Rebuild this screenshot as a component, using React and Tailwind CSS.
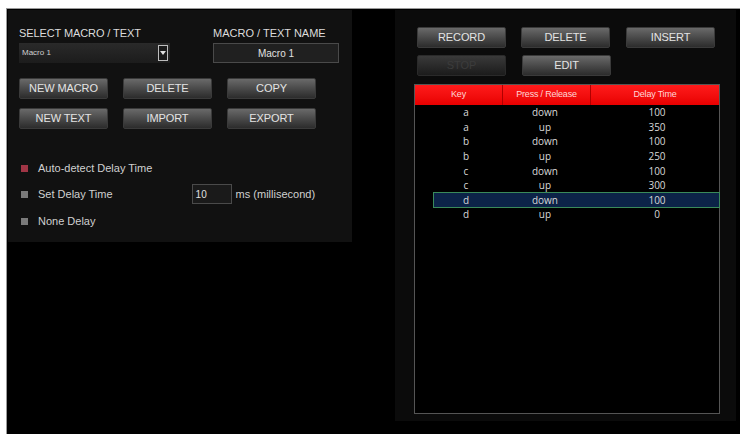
import React from "react";

const F = { fontFamily: '"Liberation Sans", Arial, sans-serif' };
const OS = { fontFamily: '"Open Sans", "DejaVu Sans", sans-serif' };

function Btn({ children, disabled }) {
  return (
    <div
      className={
        "h-[21px] w-[89px] flex items-center justify-center rounded-[2px] border text-[11px] tracking-[-0.1px] " +
        (disabled
          ? "border-[#2a2a2a] bg-gradient-to-b from-[#3a3a3a] to-[#1c1c1c] text-[#3c3c3c]"
          : "border-[#3a3a3a] bg-gradient-to-b from-[#6a6a6a] via-[#4a4a4a] to-[#2c2c2c] text-[#e4e4e4]")
      }
      style={F}
    >
      {children}
    </div>
  );
}

function Check({ color, label }) {
  return (
    <div className="flex items-center h-[12px]">
      <div className={"w-[7px] h-[7px] ml-[2px] " + color} />
      <span className="ml-[10px] text-[11px] text-[#d0d0d0]" style={F}>
        {label}
      </span>
    </div>
  );
}

const rows = [
  ["a", "down", "100"],
  ["a", "up", "350"],
  ["b", "down", "100"],
  ["b", "up", "250"],
  ["c", "down", "100"],
  ["c", "up", "300"],
  ["d", "down", "100"],
  ["d", "up", "0"],
];

export default function App() {
  return (
    <div className="w-[745px] h-[434px] bg-white overflow-hidden flex flex-col pt-[8px] pl-[6px] pr-[5px]">
      <div className="flex-1 bg-black border-t border-l border-[#9a9a9a] flex items-start">
        {/* Left panel */}
        <div className="ml-[1px] mt-[1px] w-[344px] h-[232px] bg-[#111111] pt-[16px] pl-[11px]">
          <div className="flex">
            <div className="w-[194px]">
              <div className="text-[11px] leading-[14px] text-[#dcdcdc] tracking-[-0.1px]" style={F}>
                SELECT MACRO / TEXT
              </div>
              <div className="mt-[3px] w-[151px] h-[20px] bg-gradient-to-b from-[#2a2a2a] to-[#1c1c1c] flex items-center justify-between">
                <span className="ml-[3px] text-[8px] text-[#cfcfcf]" style={F}>
                  Macro 1
                </span>
                <div className="mr-[2px] w-[10px] h-[16px] border border-[#bdbdbd] bg-[#1a1a1a] flex items-center justify-center">
                  <svg width="6" height="4" viewBox="0 0 6 4">
                    <path d="M0 0 L6 0 L3 4 Z" fill="#e0e0e0" />
                  </svg>
                </div>
              </div>
            </div>
            <div>
              <div className="text-[11px] leading-[14px] text-[#dcdcdc]" style={F}>
                MACRO / TEXT NAME
              </div>
              <div className="mt-[3px] w-[126px] h-[20px] bg-[#202020] border border-[#4a4a4a] flex items-center justify-center">
                <span className="text-[10px] text-[#e0e0e0]" style={F}>
                  Macro 1
                </span>
              </div>
            </div>
          </div>
          <div className="mt-[15px] flex gap-[15px]">
            <Btn>NEW MACRO</Btn>
            <Btn>DELETE</Btn>
            <Btn>COPY</Btn>
          </div>
          <div className="mt-[9px] flex gap-[15px]">
            <Btn>NEW TEXT</Btn>
            <Btn>IMPORT</Btn>
            <Btn>EXPORT</Btn>
          </div>
          <div className="mt-[33px] flex flex-col">
            <Check color="bg-[#a03545]" label="Auto-detect Delay Time" />
            <div className="mt-[13px] flex items-center h-[14px]">
              <Check color="bg-[#7a7a7a]" label="Set Delay Time" />
              <div className="ml-[79px] w-[40px] h-[20px] bg-[#1a1a1a] border border-[#4a4a4a] flex items-center">
                <span className="ml-[3px] text-[10px] text-[#e0e0e0]" style={F}>
                  10
                </span>
              </div>
              <span className="ml-[4px] text-[11px] text-[#d0d0d0]" style={F}>
                ms (millisecond)
              </span>
            </div>
            <div className="mt-[14px]">
              <Check color="bg-[#7a7a7a]" label="None Delay" />
            </div>
          </div>
        </div>

        {/* Right panel */}
        <div className="ml-[43px] mt-[1px] w-[341px] h-[411px] bg-[#0b0b0b] pt-[17px]">
          <div className="pl-[22px] flex gap-[16px]">
            <div className="w-[88px]"><Btn>RECORD</Btn></div>
            <Btn>DELETE</Btn>
            <Btn>INSERT</Btn>
          </div>
          <div className="mt-[7px] pl-[22px] flex gap-[16px]">
            <Btn disabled>STOP</Btn>
            <Btn>EDIT</Btn>
          </div>
          <div className="mt-[8px] ml-[19px] w-[306px] h-[330px] border border-[#555555] bg-black flex flex-col">
            <div className="h-[20px] bg-gradient-to-b from-[#ff1a1a] to-[#e80000] flex text-[9px] text-[#ffd6d6] tracking-[-0.2px]" style={F}>
              <div className="w-[88px] flex items-center justify-center border-r border-[#b00000]">Key</div>
              <div className="w-[88px] flex items-center justify-center border-r border-[#b00000]">Press / Release</div>
              <div className="flex-1 flex items-center justify-center">Delay Time</div>
            </div>
            <div className="flex flex-col pt-[0px]">
              {rows.map((r, i) => {
                const sel = i === 6;
                return (
                  <div
                    key={i}
                    className={
                      "flex items-center text-[10px] text-[#d8d8d8] leading-none " +
                      (sel
                        ? "ml-[18px] -mr-[1px] border border-[#3a8a5a] bg-[#0c2348] h-[16px] -my-[0.7px]"
                        : "h-[14.6px]")
                    }
                    style={OS}
                  >
                    <div className={(sel ? "w-[83px] pr-[19px]" : "w-[102px]") + " flex justify-center"}>
                      {r[0]}
                    </div>
                    <div className="w-[56px] flex justify-center">{r[1]}</div>
                    <div className="w-[64px]" />
                    <div className="w-[40px] flex justify-center">{r[2]}</div>
                  </div>
                );
              })}
            </div>
          </div>
        </div>
      </div>
    </div>
  );
}
